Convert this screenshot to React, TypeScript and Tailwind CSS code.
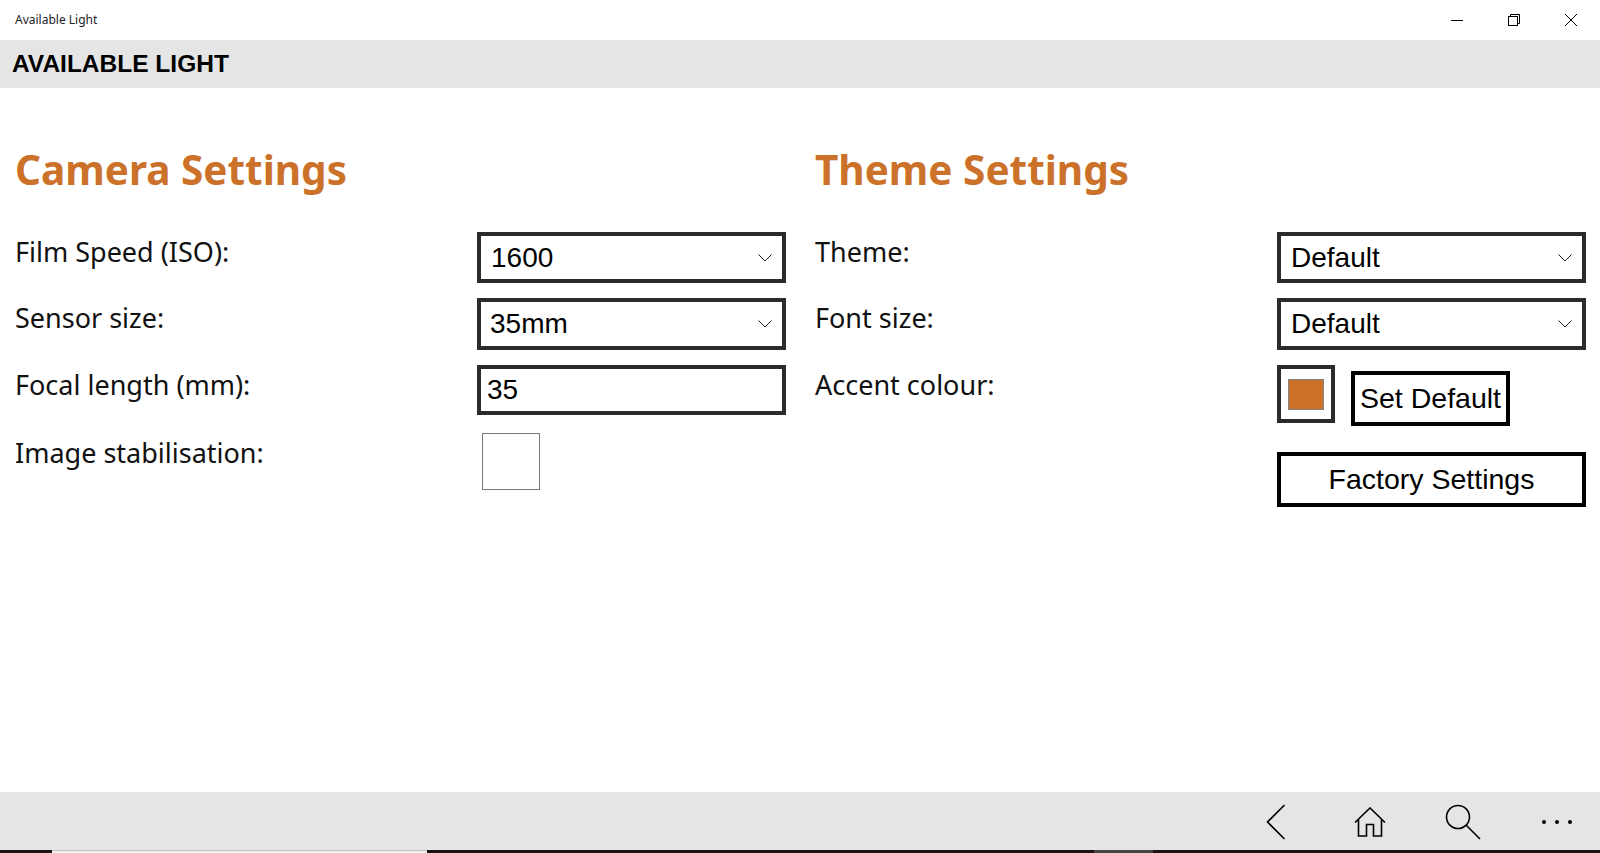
import React from "react";

const Chevron = () => (
  <svg width="14" height="8" viewBox="0 0 14 8" fill="none" stroke="#222" strokeWidth="1">
    <path d="M0.5 0.5 L7 7 L13.5 0.5" />
  </svg>
);

const SelectBox = ({ value, pad, h }: { value: string; pad: string; h: string }) => (
  <div className={`flex items-center justify-between w-[309px] border-[4px] border-[#2b2b2b] pr-[10px] text-[28px] ${pad} ${h}`}>
    <span>{value}</span>
    <Chevron />
  </div>
);

const Label = ({ text }: { text: string }) => (
  <p className="w-[462px] font-['Noto_Sans',sans-serif] text-[27px] leading-[32px] text-[#111] pt-[1px] mt-[3px]">{text}</p>
);

const Heading = ({ text }: { text: string }) => (
  <h2 className="font-['Noto_Sans',sans-serif] font-bold text-[40.5px] leading-[56px] text-[#cb712a] mb-[34px]">{text}</h2>
);

const CameraSettings = () => (
  <section className="w-[799px] pl-[15px]">
    <Heading text="Camera Settings" />
    <div className="flex h-[66px]">
      <Label text="Film Speed (ISO):" />
      <SelectBox value="1600" pad="pl-[10px]" h="h-[51px]" />
    </div>
    <div className="flex h-[67px]">
      <Label text="Sensor size:" />
      <SelectBox value="35mm" pad="pl-[9px]" h="h-[52px]" />
    </div>
    <div className="flex h-[68px]">
      <Label text="Focal length (mm):" />
      <div className="flex items-center w-[309px] h-[50px] border-[4px] border-[#2b2b2b] pl-[6px] text-[28px]">35</div>
    </div>
    <div className="flex">
      <Label text="Image stabilisation:" />
      <div className="ml-[5px] w-[58px] h-[57px] border border-[#777] bg-white" />
    </div>
  </section>
);

const ThemeSettings = () => (
  <section className="w-[801px] pl-[16px]">
    <Heading text="Theme Settings" />
    <div className="flex h-[66px]">
      <Label text="Theme:" />
      <SelectBox value="Default" pad="pl-[10px]" h="h-[51px]" />
    </div>
    <div className="flex h-[67px]">
      <Label text="Font size:" />
      <SelectBox value="Default" pad="pl-[10px]" h="h-[52px]" />
    </div>
    <div className="flex h-[87px]">
      <Label text="Accent colour:" />
      <div className="flex items-start gap-[16px]">
        <div className="flex items-center justify-center w-[58px] h-[58px] border-[4px] border-[#2b2b2b]">
          <div className="w-[36px] h-[31px] bg-[#cb712a] border border-[#808080]" />
        </div>
        <button className="w-[159px] h-[55px] mt-[6px] border-[4px] border-black text-[28.5px] text-black whitespace-nowrap">Set Default</button>
      </div>
    </div>
    <div className="flex">
      <div className="w-[462px]" />
      <button className="w-[309px] h-[55px] border-[4px] border-black text-[28.5px] text-black">Factory Settings</button>
    </div>
  </section>
);

export default function App() {
  return (
    <div className="flex flex-col h-[853px] overflow-hidden bg-white font-['Liberation_Sans',Arial,sans-serif] text-black">
      <header className="flex items-center justify-between h-[40px] pl-[15px] pr-[1px] shrink-0">
        <span className="font-['Noto_Sans',sans-serif] text-[12px] text-[#222]">Available Light</span>
        <div className="flex items-center">
          <div className="flex items-center justify-center w-[57px]">
            <svg width="12" height="12" viewBox="0 0 12 12" stroke="#000" fill="none"><path d="M0 6.5 H12" /></svg>
          </div>
          <div className="flex items-center justify-center w-[57px]">
            <svg width="12" height="12" viewBox="0 0 12 12" stroke="#000" fill="none">
              <rect x="0.5" y="2.5" width="9" height="9" />
              <path d="M2.5 2.5 V0.5 H11.5 V9.5 H9.5" />
            </svg>
          </div>
          <div className="flex items-center justify-center w-[57px]">
            <svg width="12" height="12" viewBox="0 0 12 12" stroke="#000" fill="none"><path d="M0 0 L12 12 M12 0 L0 12" /></svg>
          </div>
        </div>
      </header>

      <div className="flex items-center h-[48px] bg-[#e5e5e5] pl-[12px] shrink-0">
        <h1 className="text-[24.5px] font-bold">AVAILABLE LIGHT</h1>
      </div>

      <main className="flex flex-1 pt-[54px]">
        <CameraSettings />
        <ThemeSettings />
      </main>

      <nav className="flex items-center justify-end h-[58px] bg-[#e5e5e5] shrink-0">
        <div className="flex items-center w-[348px] pl-[14px] pt-[2px]">
          <svg width="20" height="36" viewBox="0 0 20 36" fill="none" stroke="#000" strokeWidth="1.6">
            <path d="M18.5 1 L1.5 18 L18.5 35" />
          </svg>
          <svg className="ml-[68px]" width="32" height="30" viewBox="0 0 32 30" fill="none" stroke="#000" strokeWidth="1.6">
            <path d="M1 15.5 L16 1 L31 15.5 M4.5 12.5 V29 H12.5 V17.5 H19.5 V29 H27.5 V12.5" />
          </svg>
          <svg className="ml-[59px]" width="36" height="36" viewBox="0 0 36 36" fill="none" stroke="#000" strokeWidth="1.6">
            <circle cx="13" cy="13" r="11.5" />
            <path d="M21 21 L35 35" />
          </svg>
          <div className="flex gap-[9px] ml-[61px]">
            <span className="w-[4px] h-[4px] rounded-full bg-black" />
            <span className="w-[4px] h-[4px] rounded-full bg-black" />
            <span className="w-[4px] h-[4px] rounded-full bg-black" />
          </div>
        </div>
      </nav>

      <footer className="flex h-[3px] shrink-0 bg-[#1a1512]">
        <div className="w-[52px]" />
        <div className="w-[375px] bg-[#eeeeee] border-t border-[#c4c4c4]" />
        <div className="w-[667px]" />
        <div className="w-[59px] bg-[#444444]" />
      </footer>
    </div>
  );
}
